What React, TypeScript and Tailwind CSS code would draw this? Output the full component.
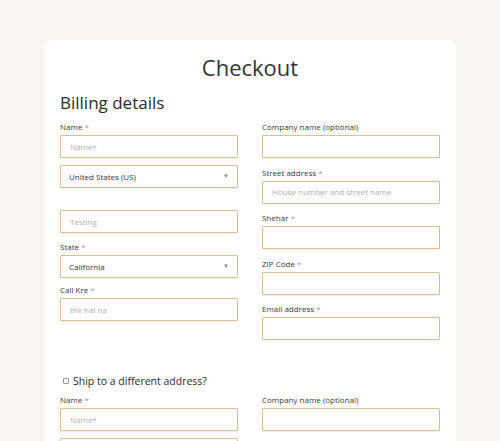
const font = { fontFamily: '"Open Sans", "Noto Sans", sans-serif' };

function Label({ text, req }: { text: string; req?: boolean }) {
  return (
    <div className="text-[8px] leading-[10px] text-[#3a3a3a]">
      {text}
      {req && <span className="text-[#9a9a9a]"> *</span>}
    </div>
  );
}

function Input({ placeholder, className = "" }: { placeholder?: string; className?: string }) {
  return (
    <div
      className={
        "h-[23px] border border-[#d8bf98] rounded-[1px] bg-white px-[9px] flex items-center text-[8px] text-[#b0b0b0] shadow-[0_1px_1px_rgba(0,0,0,0.06)] " +
        className
      }
    >
      {placeholder}
    </div>
  );
}

function Select({ value, className = "" }: { value: string; className?: string }) {
  return (
    <div
      className={
        "h-[23px] border border-[#d8bf98] rounded-[1px] bg-white pl-[8px] pr-[8px] flex items-center justify-between text-[8px] text-[#333] shadow-[0_1px_1px_rgba(0,0,0,0.06)] " +
        className
      }
    >
      <span>{value}</span>
      <span className="text-[6px] text-[#888]">▼</span>
    </div>
  );
}

function Field({ label, placeholder }: { label: string; placeholder?: string }) {
  return (
    <div className="flex flex-col gap-[3px]">
      <Label text={label} req />
      <Input placeholder={placeholder} />
    </div>
  );
}

export default function App() {
  return (
    <div className="h-[441px] overflow-hidden bg-[#f6f5f0] pt-[40px]" style={font}>
      <div className="mx-[44px] bg-white rounded-[8px] px-[16px] pt-[13px] pb-[40px]">
        <h1 className="text-center text-[22px] leading-[28px] font-medium text-[#333]">Checkout</h1>
        <h2 className="mt-[11px] text-[17px] leading-[22px] text-[#2b2b2b]">Billing details</h2>

        <div className="mt-[8px] grid grid-cols-2 gap-x-[24px]">
          <div className="flex flex-col">
            <div className="flex flex-col gap-[3px]">
              <Label text="Name" req />
              <Input placeholder="Name*" />
            </div>
            <Select value="United States (US)" className="mt-[7px]" />
            <Input placeholder="Testing" className="mt-[22px]" />
            <div className="mt-[9px] flex flex-col gap-[3px]">
              <Label text="State" req />
              <Select value="California" />
            </div>
            <div className="mt-[7px] flex flex-col gap-[3px]">
              <Label text="Call Kre" req />
              <Input placeholder="thk hai na" />
            </div>
          </div>

          <div className="flex flex-col gap-[9.5px]">
            <div className="flex flex-col gap-[3px]">
              <Label text="Company name (optional)" />
              <Input />
            </div>
            <Field label="Street address" placeholder="House number and street name" />
            <Field label="Shehar" />
            <Field label="ZIP Code" />
            <Field label="Email address" />
          </div>
        </div>

        <label className="mt-[34px] flex items-center gap-[4px] text-[10.5px] leading-[14px] text-[#2b2b2b]">
          <span className="ml-[3px] w-[6px] h-[6px] border border-[#999] rounded-[1px] bg-white" />
          Ship to a different address?
        </label>

        <div className="mt-[7px] grid grid-cols-2 gap-x-[24px]">
          <div className="flex flex-col">
            <div className="flex flex-col gap-[3px]">
              <Label text="Name" req />
              <Input placeholder="Name*" />
            </div>
            <Input className="mt-[7px]" />
          </div>
          <div className="flex flex-col gap-[3px]">
            <Label text="Company name (optional)" />
            <Input />
          </div>
        </div>
      </div>
    </div>
  );
}
